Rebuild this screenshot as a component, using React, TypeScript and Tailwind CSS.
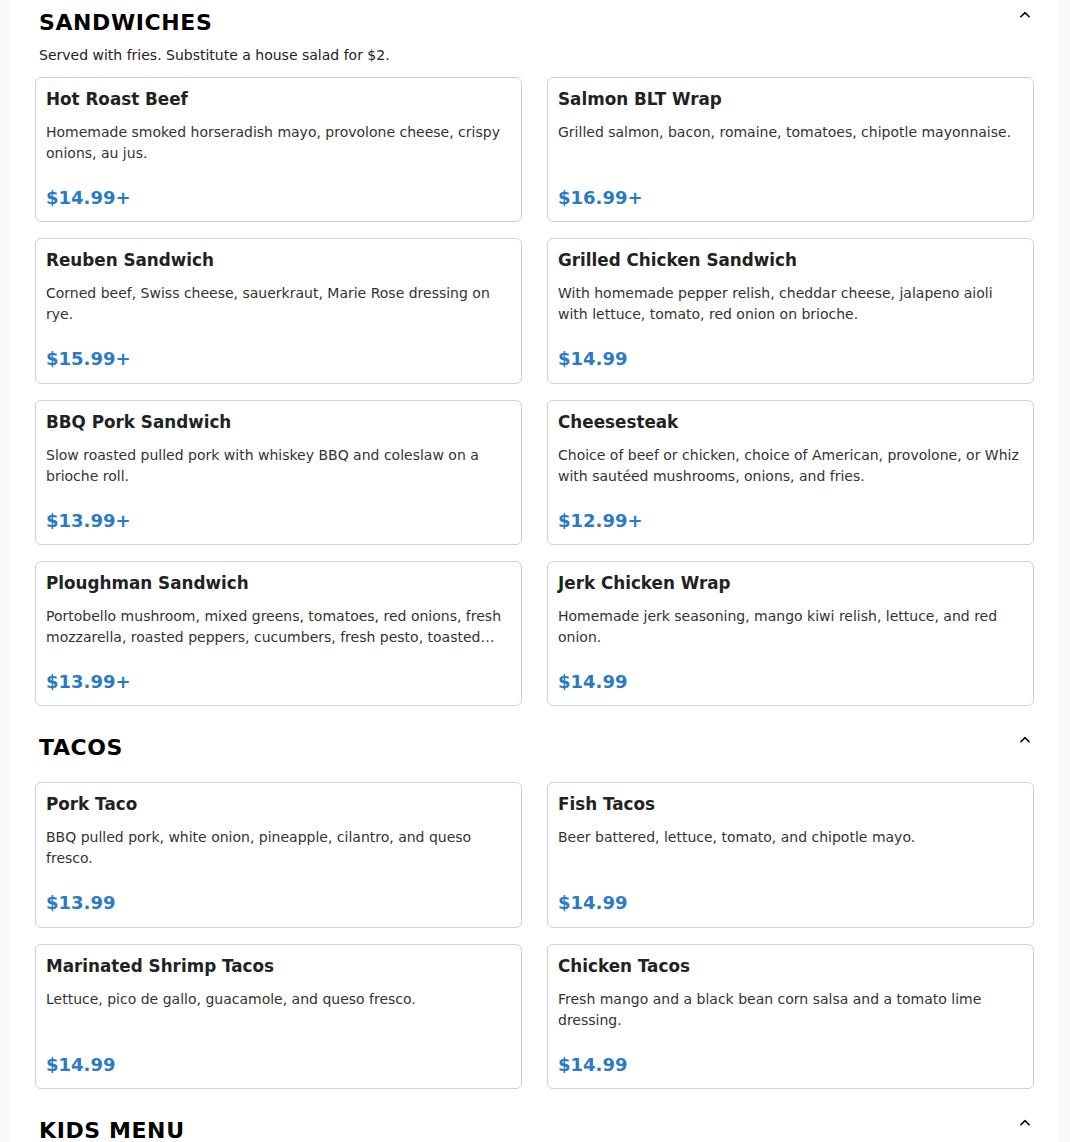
import React from "react";

type Item = { name: string; desc: string; price: string };
type Section = { title: string; subtitle?: string; items: Item[] };

const sections: Section[] = [
  {
    title: "SANDWICHES",
    subtitle: "Served with fries. Substitute a house salad for $2.",
    items: [
      { name: "Hot Roast Beef", desc: "Homemade smoked horseradish mayo, provolone cheese, crispy onions, au jus.", price: "$14.99+" },
      { name: "Salmon BLT Wrap", desc: "Grilled salmon, bacon, romaine, tomatoes, chipotle mayonnaise.", price: "$16.99+" },
      { name: "Reuben Sandwich", desc: "Corned beef, Swiss cheese, sauerkraut, Marie Rose dressing on rye.", price: "$15.99+" },
      { name: "Grilled Chicken Sandwich", desc: "With homemade pepper relish, cheddar cheese, jalapeno aioli with lettuce, tomato, red onion on brioche.", price: "$14.99" },
      { name: "BBQ Pork Sandwich", desc: "Slow roasted pulled pork with whiskey BBQ and coleslaw on a brioche roll.", price: "$13.99+" },
      { name: "Cheesesteak", desc: "Choice of beef or chicken, choice of American, provolone, or Whiz with sautéed mushrooms, onions, and fries.", price: "$12.99+" },
      { name: "Ploughman Sandwich", desc: "Portobello mushroom, mixed greens, tomatoes, red onions, fresh mozzarella, roasted peppers, cucumbers, fresh pesto, toasted ciabatta.", price: "$13.99+" },
      { name: "Jerk Chicken Wrap", desc: "Homemade jerk seasoning, mango kiwi relish, lettuce, and red onion.", price: "$14.99" },
    ],
  },
  {
    title: "TACOS",
    items: [
      { name: "Pork Taco", desc: "BBQ pulled pork, white onion, pineapple, cilantro, and queso fresco.", price: "$13.99" },
      { name: "Fish Tacos", desc: "Beer battered, lettuce, tomato, and chipotle mayo.", price: "$14.99" },
      { name: "Marinated Shrimp Tacos", desc: "Lettuce, pico de gallo, guacamole, and queso fresco.", price: "$14.99" },
      { name: "Chicken Tacos", desc: "Fresh mango and a black bean corn salsa and a tomato lime dressing.", price: "$14.99" },
    ],
  },
  { title: "KIDS MENU", items: [] },
];

function Chevron() {
  return (
    <svg width="14" height="14" viewBox="0 0 24 24" fill="none" stroke="#111" strokeWidth="3" strokeLinecap="round" strokeLinejoin="round">
      <path d="M5 15l7-7 7 7" />
    </svg>
  );
}

function Card({ item }: { item: Item }) {
  return (
    <div className="flex flex-col rounded-[6px] border border-[#d0d0d0] bg-white px-[10px] pt-[11px] pb-[12.33px]">
      <div className="text-[16.8px] leading-[20px] font-bold text-[#222]">{item.name}</div>
      <p className="mt-[13px] h-[42px] text-[14px] leading-[21px] text-[#333] line-clamp-2">{item.desc}</p>
      <div className="mt-[23px] text-[18px] leading-[22px] font-bold text-[#2a7ac4]">{item.price}</div>
    </div>
  );
}

export default function App() {
  return (
    <div className="min-h-screen bg-[#fafafa]" style={{ fontFamily: '"DejaVu Sans", Verdana, sans-serif' }}>
      <div className="mx-[11px] min-h-[1142px] bg-white pl-[24px] pr-[25px] pt-[9px]">
        <div className="flex flex-col gap-[28px]">
          {sections.map((s) => (
            <section key={s.title} className="flex flex-col">
              <div className="relative">
                <h2 className="pl-[4px] text-[22px] leading-[28px] font-bold tracking-[0.6px] text-black">{s.title}</h2>
                <button className="absolute right-[2px] top-[-1px] flex h-[14px] w-[14px] items-center justify-center">
                  <Chevron />
                </button>
              </div>
              {s.subtitle && (
                <p className="mt-[8.5px] pl-[4px] text-[14px] leading-[18px] text-[#222]">{s.subtitle}</p>
              )}
              {s.items.length > 0 && (
                <div
                  className={
                    s.subtitle
                      ? "mt-[13.5px] grid grid-cols-2 gap-x-[25px] gap-y-[16px]"
                      : "mt-[20px] grid grid-cols-2 gap-x-[25px] gap-y-[16px]"
                  }
                >
                  {s.items.map((it) => (
                    <Card key={it.name} item={it} />
                  ))}
                </div>
              )}
            </section>
          ))}
        </div>
      </div>
    </div>
  );
}
